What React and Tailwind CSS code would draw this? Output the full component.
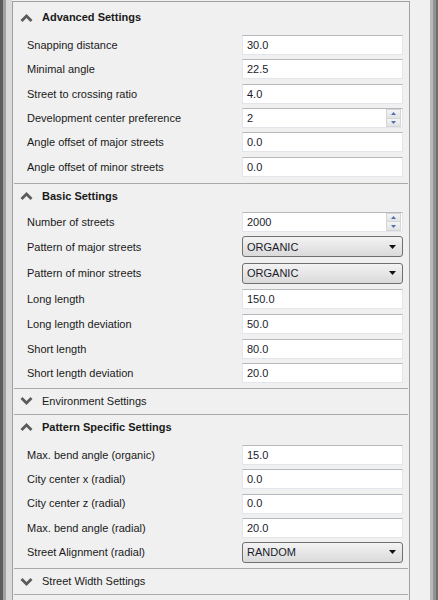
import React from "react";

const FONT = { fontFamily: '"Liberation Sans", Arial, sans-serif' };

const sections = [
  {
    title: "Advanced Settings",
    open: true,
    pad: "pt-[3px] pb-[4px]",
    rows: [
      { label: "Snapping distance", value: "30.0", h: "h-[24.33px]" },
      { label: "Minimal angle", value: "22.5", h: "h-[24.33px]" },
      { label: "Street to crossing ratio", value: "4.0", h: "h-[24.33px]" },
      { label: "Development center preference", value: "2", type: "spin", h: "h-[24.33px]" },
      { label: "Angle offset of major streets", value: "0.0", h: "h-[24.33px]" },
      { label: "Angle offset of minor streets", value: "0.0", h: "h-[24.33px]" },
    ],
  },
  {
    title: "Basic Settings",
    open: true,
    pad: "pt-[1px] pb-[3px]",
    rows: [
      { label: "Number of streets", value: "2000", type: "spin", h: "h-[24px]" },
      { label: "Pattern of major streets", value: "ORGANIC", type: "combo", h: "h-[26px]" },
      { label: "Pattern of minor streets", value: "ORGANIC", type: "combo", h: "h-[27px]" },
      { label: "Long length", value: "150.0", h: "h-[25px]" },
      { label: "Long length deviation", value: "50.0", h: "h-[25px]" },
      { label: "Short length", value: "80.0", h: "h-[24px]" },
      { label: "Short length deviation", value: "20.0", h: "h-[24px]" },
    ],
  },
  { title: "Environment Settings", open: false },
  {
    title: "Pattern Specific Settings",
    open: true,
    pad: "pt-[3px] pb-[4px]",
    rows: [
      { label: "Max. bend angle (organic)", value: "15.0", h: "h-[24.25px]" },
      { label: "City center x (radial)", value: "0.0", h: "h-[24.25px]" },
      { label: "City center z (radial)", value: "0.0", h: "h-[24.25px]" },
      { label: "Max. bend angle (radial)", value: "20.0", h: "h-[24.25px]" },
      { label: "Street Alignment (radial)", value: "RANDOM", type: "combo", h: "h-[24.25px]" },
    ],
  },
  { title: "Street Width Settings", open: false },
];

const Chevron = ({ up }) => (
  <svg width="13" height="8" viewBox="0 0 13 8" className="shrink-0">
    <polyline
      points={up ? "1.5,7 6.5,2 11.5,7" : "1.5,1 6.5,6 11.5,1"}
      fill="none"
      stroke="#5b5b5b"
      strokeWidth="2.8"
    />
  </svg>
);

const Field = ({ row }) => {
  if (row.type === "combo") {
    return (
      <div className="w-[161px] h-[21px] flex items-center justify-between rounded-[3px] border border-[#707070] bg-gradient-to-b from-[#f3f3f3] to-[#dadada] pl-[4px] pr-[6px] text-[11px] text-[#1b1b2b]">
        <span>{row.value}</span>
        <svg width="7" height="4" viewBox="0 0 7 4">
          <polygon points="0,0 7,0 3.5,4" fill="#111" />
        </svg>
      </div>
    );
  }
  return (
    <div className="w-[161px] h-[20px] flex items-center bg-white border border-[#e2e6ea] border-t-[#b5b8bd] pl-[4px] text-[11px] text-[#1b1b2b]">
      <span className="flex-1">{row.value}</span>
      {row.type === "spin" && (
        <div className="w-[15px] h-[18px] flex flex-col mr-[1px]">
          <div className="flex-1 flex items-center justify-center border border-[#d3d5d8] bg-gradient-to-b from-[#f4f4f4] to-[#e2e2e2]">
            <svg width="5" height="3" viewBox="0 0 5 3">
              <polygon points="0,3 5,3 2.5,0" fill="#4f6fa8" />
            </svg>
          </div>
          <div className="flex-1 flex items-center justify-center border border-t-0 border-[#d3d5d8] bg-gradient-to-b from-[#f4f4f4] to-[#e2e2e2]">
            <svg width="5" height="3" viewBox="0 0 5 3">
              <polygon points="0,0 5,0 2.5,3" fill="#4f6fa8" />
            </svg>
          </div>
        </div>
      )}
    </div>
  );
};

const Section = ({ section, first }) => (
  <div className={first ? "pt-[3px]" : "border-t border-[#a9a9a9] mx-[1px]"}>
    <div className={`h-[25px] flex items-center gap-[9px] ${first ? "pl-[7px]" : "pl-[6px]"} text-[11px] text-[#1a1a1a]`}>
      <Chevron up={section.open} />
      <span className={section.open ? "font-bold" : ""}>{section.title}</span>
    </div>
    {section.open && (
      <div className={section.pad}>
        {section.rows.map((row) => (
          <div key={row.label} className={`${row.h} flex items-center justify-between ${first ? "pl-[14px] pr-[6px]" : "pl-[13px] pr-[5px]"}`}>
            <span className="text-[11px] text-[#1a1a1a]">{row.label}</span>
            <Field row={row} />
          </div>
        ))}
      </div>
    )}
  </div>
);

export default function App() {
  return (
    <div className="w-[438px] h-[600px] flex bg-[#f0f0f0] overflow-hidden" style={FONT}>
      <div className="flex w-[12px] h-full">
        <div className="w-[3px] bg-[#5d5d5d]" />
        <div className="w-[3px] bg-[#a2a2a2]" />
        <div className="w-[6px] bg-[#dadada]" />
      </div>
      <div className="w-[398px] h-full mt-[1px] border-l border-t border-r border-[#a0a0a0] bg-[#f0f0f0]">
        {sections.map((s, i) => (
          <Section key={s.title} section={s} first={i === 0} />
        ))}
        <div className="border-t border-[#a9a9a9] mx-[1px]" />
      </div>
      <div className="flex-1" />
      <div className="flex w-[8px] h-full">
        <div className="w-[3px] bg-[#b9b9b9]" />
        <div className="w-[3px] bg-[#939393]" />
        <div className="w-[2px] bg-[#6e6e6e]" />
      </div>
    </div>
  );
}
